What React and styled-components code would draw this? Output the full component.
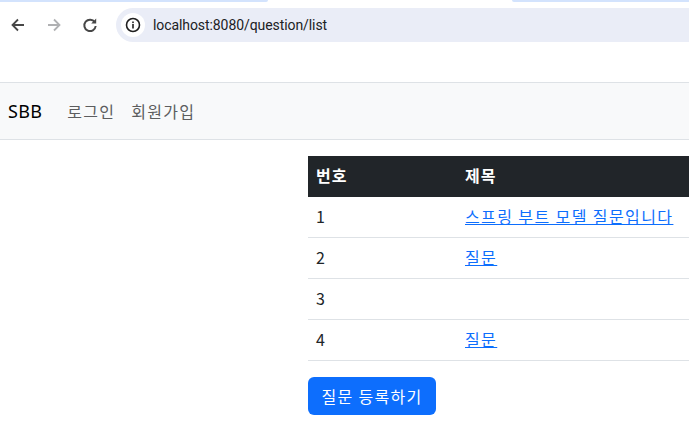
import React from "react";
import styled, { createGlobalStyle } from "styled-components";

const GlobalStyle = createGlobalStyle`
  html, body {
    margin: 0;
    width: 689px;
    height: 439px;
    overflow: hidden;
    background: #fff;
    font-family: "Noto Sans CJK KR", "Noto Sans", sans-serif;
  }
`;

const TabStrip = styled.div`
  height: 2px;
  display: flex;
  justify-content: space-between;
`;

const TabEdge = styled.div`
  width: ${(p) => p.$width}px;
  background: #d3e3fd;
  border-radius: ${(p) => (p.$left ? "0 0 4px 0" : "0 0 0 4px")};
`;

const Toolbar = styled.div`
  height: 34px;
  margin-top: 6px;
  display: flex;
  align-items: center;
`;

const NavIcons = styled.div`
  width: 116px;
  padding-left: 8px;
  box-sizing: border-box;
  display: flex;
  gap: 16px;
`;

const NavIcon = styled.svg`
  width: 20px;
  height: 20px;
  fill: none;
  stroke: ${(p) => (p.$muted ? "#b0b1b3" : "#474747")};
  stroke-width: 1.8;
`;

const AddressBar = styled.div`
  flex: 1;
  height: 34px;
  background: #eaedf7;
  border-radius: 17px 0 0 17px;
  display: flex;
  align-items: center;
  padding-left: 5px;
  gap: 8px;
`;

const InfoBadge = styled.div`
  width: 24px;
  height: 24px;
  border-radius: 50%;
  background: #fff;
  display: flex;
  align-items: center;
  justify-content: center;
`;

const Url = styled.span`
  font-family: "Roboto", sans-serif;
  font-size: 14px;
  color: #202124;
  letter-spacing: -0.08px;
`;

const Navbar = styled.nav`
  margin-top: 40px;
  height: 58px;
  box-sizing: border-box;
  background: #f8f9fa;
  border-top: 1px solid #dee2e6;
  border-bottom: 1px solid #dee2e6;
  display: flex;
  align-items: center;
  padding-left: 8px;
`;

const Brand = styled.a`
  font-family: "Noto Sans", sans-serif;
  font-size: 18px;
  letter-spacing: 0.3px;
  color: #000;
  margin-right: 17px;
`;

const NavLink = styled.a`
  font-size: 16px;
  letter-spacing: 1.3px;
  color: #5c5d5e;
  padding: 0 8px;
  &:first-of-type {
    padding-left: 9px;
  }
`;

const Main = styled.main`
  margin-top: 16px;
  padding-left: 308px;
`;

const Table = styled.table`
  width: 100%;
  border-collapse: separate;
  border-spacing: 0;
  table-layout: fixed;
  font-size: 16px;
`;

const HeadCell = styled.th`
  background: #212529;
  color: #fff;
  font-weight: 700;
  letter-spacing: 1.1px;
  text-align: left;
  height: 41px;
  padding: 0 8px 3px;
  box-sizing: border-box;
  width: ${(p) => p.$width || "auto"};
`;

const Cell = styled.td`
  height: 41px;
  padding: 0 8px 2px;
  box-sizing: border-box;
  border-bottom: 1px solid #dee2e6;
  color: #212529;
  white-space: nowrap;
`;

const QuestionLink = styled.a`
  color: #0d6efd;
  letter-spacing: 1.4px;
  text-decoration: underline;
`;

const PrimaryButton = styled.button`
  display: block;
  margin-top: 16px;
  width: 128px;
  height: 38px;
  border: none;
  border-radius: 6px;
  background: #0d6efd;
  color: #fff;
  font-family: inherit;
  font-size: 16px;
  letter-spacing: 1.3px;
  padding: 0;
`;

const questions = [
  { id: 1, title: "스프링 부트 모델 질문입니다" },
  { id: 2, title: "질문" },
  { id: 3, title: "" },
  { id: 4, title: "질문" },
];

export default function App() {
  return (
    <>
      <GlobalStyle />
      <TabStrip>
        <TabEdge $width={268} $left />
        <TabEdge $width={177} />
      </TabStrip>
      <Toolbar>
        <NavIcons>
          <NavIcon viewBox="0 0 20 20">
            <path d="M16 10H4.500M10 4.500L4.500 10l5.500 5.500" />
          </NavIcon>
          <NavIcon viewBox="0 0 20 20" $muted>
            <path d="M4 10h11.500M10 4.500l5.500 5.500-5.500 5.500" />
          </NavIcon>
          <NavIcon viewBox="0 0 20 20">
            <path d="M14.800 7.200A5.700 5.700 0 1 0 15.700 11" strokeWidth="2" />
            <path d="M16.200 3.500v5h-5" fill="#474747" stroke="none" />
          </NavIcon>
        </NavIcons>
        <AddressBar>
          <InfoBadge>
            <svg width="16" height="16" viewBox="0 0 16 16" fill="none">
              <circle cx="8" cy="8" r="6.500" stroke="#1f1f1f" strokeWidth="1.600" />
              <rect x="7.200" y="7" width="1.600" height="4.500" fill="#1f1f1f" />
              <rect x="7.200" y="4.500" width="1.600" height="1.600" fill="#1f1f1f" />
            </svg>
          </InfoBadge>
          <Url>localhost:8080/question/list</Url>
        </AddressBar>
      </Toolbar>
      <Navbar>
        <Brand>SBB</Brand>
        <NavLink>로그인</NavLink>
        <NavLink>회원가입</NavLink>
      </Navbar>
      <Main>
        <Table>
          <thead>
            <tr>
              <HeadCell $width="149px">번호</HeadCell>
              <HeadCell>제목</HeadCell>
            </tr>
          </thead>
          <tbody>
            {questions.map((q) => (
              <tr key={q.id}>
                <Cell>{q.id}</Cell>
                <Cell>{q.title && <QuestionLink href="#">{q.title}</QuestionLink>}</Cell>
              </tr>
            ))}
          </tbody>
        </Table>
        <PrimaryButton>질문 등록하기</PrimaryButton>
      </Main>
    </>
  );
}
